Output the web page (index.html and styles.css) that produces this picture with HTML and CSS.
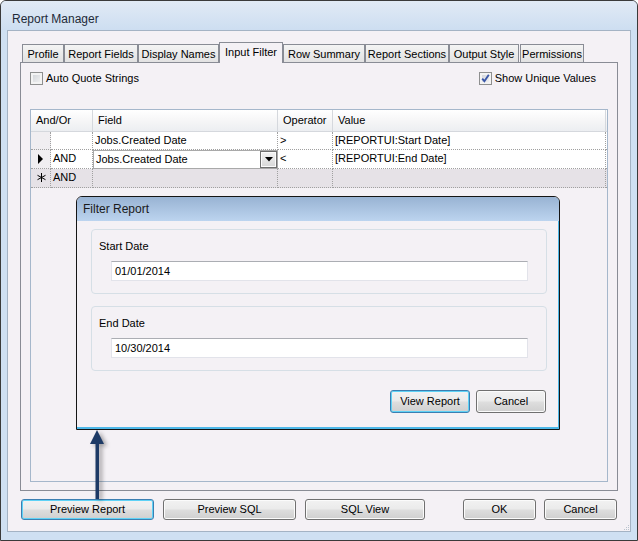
FILE: index.html
```html
<!DOCTYPE html>
<html>
<head>
<meta charset="utf-8">
<link rel="stylesheet" href="styles.css">
</head>
<body>
<div class="window">
  <div class="titlebar">Report Manager</div>
  <div class="client">
    <div class="tabs">
      <div class="tab t1">Profile</div>
      <div class="tab t2">Report Fields</div>
      <div class="tab t3">Display Names</div>
      <div class="tab t4 active">Input Filter</div>
      <div class="tab t5">Row Summary</div>
      <div class="tab t6">Report Sections</div>
      <div class="tab t7">Output Style</div>
      <div class="tab t8">Permissions</div>
    </div>
    <div class="panel">
      <div class="options">
        <label class="opt"><span class="cb"></span>Auto Quote Strings</label>
        <label class="opt opt-right"><span class="cb"><svg class="check" width="11" height="11" viewBox="0 0 11 11"><path d="M2.2 5.6 L4.4 8.2 L8.8 1.8" fill="none" stroke="#3a57a8" stroke-width="1.9"/></svg></span>Show Unique Values</label>
      </div>
      <div class="grid">
        <div class="hdr span2">And/Or</div>
        <div class="hdr">Field</div>
        <div class="hdr">Operator</div>
        <div class="hdr">Value</div>
        <div class="hdr filler"></div>

        <div class="cell rowhdr"></div>
        <div class="cell"></div>
        <div class="cell">Jobs.Created Date</div>
        <div class="cell">&gt;</div>
        <div class="cell">[REPORTUI:Start Date]</div>
        <div class="cell filler"></div>

        <div class="cell rowhdr"><svg class="glyph" width="6" height="10" viewBox="0 0 6 10"><polygon points="0,0 5,5 0,10" fill="#000"/></svg></div>
        <div class="cell">AND</div>
        <div class="cell combo"><span>Jobs.Created Date</span><span class="ddbtn"><svg width="8" height="5" viewBox="0 0 8 5"><polygon points="0,0 8,0 4,4.5" fill="#000"/></svg></span></div>
        <div class="cell">&lt;</div>
        <div class="cell">[REPORTUI:End Date]</div>
        <div class="cell filler"></div>

        <div class="cell rowhdr newrow"><svg class="glyph star" width="9" height="9" viewBox="0 0 9 9"><path d="M4.5 0 V9 M0.5 2.3 L8.5 6.7 M0.5 6.7 L8.5 2.3" stroke="#000" stroke-width="1"/></svg></div>
        <div class="cell newrow">AND</div>
        <div class="cell newrow"></div>
        <div class="cell newrow"></div>
        <div class="cell newrow"></div>
        <div class="cell newrow filler"></div>
      </div>
    </div>
    <div class="buttons">
      <div class="btn focus b-wide">Preview Report</div>
      <div class="btn b-wide">Preview SQL</div>
      <div class="btn b-mid">SQL View</div>
      <div class="btn b-small push">OK</div>
      <div class="btn b-small">Cancel</div>
    </div>
    <svg class="grip" width="7" height="7" viewBox="0 0 7 7"><g fill="#b9c3cd"><rect x="5" y="1" width="1" height="1"/><rect x="3" y="3" width="1" height="1"/><rect x="5" y="3" width="1" height="1"/><rect x="1" y="5" width="1" height="1"/><rect x="3" y="5" width="1" height="1"/><rect x="5" y="5" width="1" height="1"/></g></svg>
  </div>

  <div class="dialog">
    <div class="dlg-title">Filter Report</div>
    <div class="dlg-body">
      <div class="group">
        <div class="glabel">Start Date</div>
        <div class="input">01/01/2014</div>
      </div>
      <div class="group">
        <div class="glabel">End Date</div>
        <div class="input">10/30/2014</div>
      </div>
      <div class="dlg-buttons">
        <div class="btn focus b-view">View Report</div>
        <div class="btn b-cancel">Cancel</div>
      </div>
    </div>
  </div>

  <svg class="arrow" width="26" height="76" viewBox="0 0 26 76">
    <polygon points="11,2 4,16 18,16" fill="#1d3a66"/>
    <rect x="9.5" y="15" width="3.5" height="56" fill="#1d3a66"/>
  </svg>
</div>
</body>
</html>
```

FILE: styles.css
```css
* { box-sizing: border-box; }

body {
  margin: 0;
  font-family: "Liberation Sans", Arial, sans-serif;
  font-size: 11px;
  color: #000;
  background: #ffffff;
}

.window {
  position: relative;
  width: 638px;
  height: 541px;
  border: 1px solid #3a3a3a;
  border-radius: 6px 6px 0 0;
  background: #cfe0f2;
  display: flex;
  flex-direction: column;
  overflow: hidden;
}

.titlebar {
  flex: none;
  height: 29px;
  padding: 11px 0 0 11px;
  font-size: 12px;
  line-height: 14px;
  color: #1e2a38;
  background: linear-gradient(#e1eaf5, #cddef1);
}

.client {
  position: relative;
  flex: 1;
  margin: 0 6px 8px 6px;
  border: 1px solid #a4b3c4;
  background: #f4f1f5;
  padding-top: 11px;
  display: flex;
  flex-direction: column;
}

/* tabs */
.tabs {
  display: flex;
  align-items: flex-end;
  height: 21px;
  margin-left: 14px;
  position: relative;
  z-index: 1;
}

.tab {
  height: 19px;
  border: 1px solid #898c95;
  background: linear-gradient(#f4f4f4, #e2e2e2);
  text-align: center;
  line-height: 18px;
  white-space: nowrap;
}

.tab.active {
  height: 21px;
  border-bottom: none;
  background: #f4f1f5;
  line-height: 19px;
}

.t1 { width: 42px; }
.t2 { width: 74px; }
.t3 { width: 81px; }
.t4 { width: 64px; }
.t5 { width: 82px; }
.t6 { width: 84px; }
.t7 { width: 70px; margin-right: 1px; }
.t8 { width: 64px; }

.panel {
  margin: -1px 0 0 12px;
  width: 598px;
  height: 429px;
  border: 1px solid #898c95;
  padding: 8px 9px 8px 9px;
  display: flex;
  flex-direction: column;
}

.options {
  display: flex;
  align-items: center;
  height: 14px;
}

.opt {
  display: flex;
  align-items: center;
  gap: 3px;
  line-height: 13px;
}

.opt-right {
  margin-left: auto;
  margin-right: 12px;
}

.cb {
  width: 13px;
  height: 13px;
  border: 1px solid #8e8f8f;
  background: linear-gradient(135deg, #cdd0d5, #f6f6f6);
  box-shadow: inset 0 0 0 2px #f3f3f3;
  position: relative;
}

.check {
  position: absolute;
  left: 0;
  top: 0;
}

/* grid */
.grid {
  margin-top: 24px;
  flex: 1;
  border: 1px solid #a5b7cb;
  display: grid;
  grid-template-columns: 20px 42px 185px 55px 273px 1fr;
  grid-template-rows: 22px 18px 19px 19px;
  align-content: start;
}

.hdr {
  background: linear-gradient(#ffffff, #f6f6f7 50%, #eceef1);
  border-right: 1px solid #d5d8dd;
  border-bottom: 1px solid #d5d8dd;
  padding-left: 5px;
  line-height: 21px;
  white-space: nowrap;
}

.hdr.span2 { grid-column: span 2; }

.cell {
  background: #ffffff;
  border-right: 1px dotted #a0a0a0;
  border-bottom: 1px dotted #a0a0a0;
  padding-left: 2px;
  line-height: 17px;
  white-space: nowrap;
  position: relative;
}

.cell.filler, .hdr.filler {
  border-right: none;
  padding: 0;
}

.rowhdr {
  background: #f0eef1;
}

.newrow {
  background: #e6e2e7;
}

.glyph {
  position: absolute;
  left: 7px;
  top: 4px;
}

.glyph.star {
  left: 6px;
  top: 4px;
}

.combo {
  border: 1px solid #a9a9a9;
  display: flex;
  justify-content: space-between;
  align-items: center;
  padding-right: 0;
}

.ddbtn {
  width: 17px;
  height: 17px;
  border: 1px solid #6f6f6f;
  background: linear-gradient(#f3f3f3, #d7d7d7);
  box-shadow: inset 0 0 0 1px #fbfbfb;
  display: flex;
  align-items: center;
  justify-content: center;
}

/* buttons */
.buttons {
  display: flex;
  gap: 9px;
  margin: 8px 13px 0 13px;
}

.btn {
  height: 21px;
  border: 1px solid #707070;
  border-radius: 3px;
  background: linear-gradient(#f2f2f2 0%, #ebebeb 45%, #dddddd 55%, #cfcfcf 100%);
  box-shadow: inset 0 0 0 1px #fbfbfb;
  text-align: center;
  line-height: 19px;
  white-space: nowrap;
}

.btn.focus {
  border-color: #3c7fb1;
  box-shadow: inset 0 0 0 1px #5fd2f6;
}

.b-wide { width: 133px; }
.b-mid { width: 120px; }
.b-small { width: 73px; }
.push { margin-left: auto; margin-right: -1px; }

.grip {
  position: absolute;
  right: 0;
  bottom: 0;
}

/* dialog */
.dialog {
  position: absolute;
  left: 75px;
  top: 195px;
  width: 484px;
  height: 234px;
  border: 1px solid #151515;
  border-radius: 6px 6px 0 0;
  background: #f4f1f5;
  box-shadow: inset -1px -2px 0 #4db8e8;
  display: flex;
  flex-direction: column;
}

.dlg-title {
  height: 24px;
  border-radius: 5px 5px 0 0;
  background: linear-gradient(#98b3d3, #bcd4ef);
  font-size: 12px;
  line-height: 24px;
  padding-left: 6px;
  color: #1a1a1a;
}

.dlg-body {
  padding: 8px 12px 0 14px;
  display: flex;
  flex-direction: column;
}

.group {
  height: 65px;
  border: 1px solid #d6dfe6;
  border-radius: 4px;
  padding: 10px 18px 0 7px;
  margin-bottom: 12px;
}

.glabel {
  line-height: 13px;
}

.input {
  margin: 8px 0 0 12px;
  height: 20px;
  background: #ffffff;
  border: 1px solid #e2e3ea;
  border-top-color: #abadb3;
  padding-left: 3px;
  line-height: 19px;
}

.dlg-buttons {
  display: flex;
  justify-content: flex-end;
  gap: 6px;
  margin-top: 7px;
  padding-right: 1px;
}

.dlg-buttons .btn {
  height: 23px;
  line-height: 21px;
}

.b-view { width: 80px; }
.b-cancel { width: 70px; }

.arrow {
  position: absolute;
  left: 85px;
  top: 427px;
  filter: drop-shadow(3px 2px 2px rgba(0, 0, 0, 0.35));
}
```
